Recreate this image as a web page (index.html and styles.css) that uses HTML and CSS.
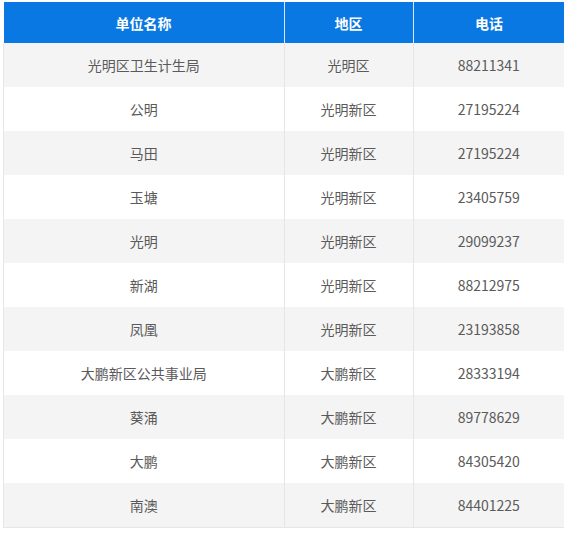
FILE: index.html
```html
<!DOCTYPE html>
<html lang="zh">
<head>
<meta charset="utf-8">
<link rel="stylesheet" href="styles.css">
</head>
<body>
<table class="tbl">
  <thead>
    <tr><th class="c1">单位名称</th><th class="c2">地区</th><th class="c3">电话</th></tr>
  </thead>
  <tbody>
    <tr><td>光明区卫生计生局</td><td>光明区</td><td>88211341</td></tr>
    <tr><td>公明</td><td>光明新区</td><td>27195224</td></tr>
    <tr><td>马田</td><td>光明新区</td><td>27195224</td></tr>
    <tr><td>玉塘</td><td>光明新区</td><td>23405759</td></tr>
    <tr><td>光明</td><td>光明新区</td><td>29099237</td></tr>
    <tr><td>新湖</td><td>光明新区</td><td>88212975</td></tr>
    <tr><td>凤凰</td><td>光明新区</td><td>23193858</td></tr>
    <tr><td>大鹏新区公共事业局</td><td>大鹏新区</td><td>28333194</td></tr>
    <tr><td>葵涌</td><td>大鹏新区</td><td>89778629</td></tr>
    <tr><td>大鹏</td><td>大鹏新区</td><td>84305420</td></tr>
    <tr><td>南澳</td><td>大鹏新区</td><td>84401225</td></tr>
  </tbody>
</table>
</body>
</html>
```
FILE: styles.css
```css
html, body { margin: 0; padding: 0; background: #fff; }
body { padding: 2px 0 0 3px; font-family: "Noto Sans CJK SC", "Noto Sans", sans-serif; }
.tbl {
  border-collapse: collapse;
  width: 559px;
  table-layout: fixed;
  font-size: 14px;
}
.c1 { width: 280px; }
.c2 { width: 128px; }
.c3 { width: 151px; }
.tbl th {
  background: #0a78e2;
  color: #fff;
  font-weight: bold;
  height: 41px;
  padding: 0;
  border-left: 1px solid #d6e8fa;
  text-align: center;
}
.tbl th:first-child { border-left: none; }
.tbl td {
  height: 44px;
  padding: 0;
  text-align: center;
  color: #5a5a5a;
  border: 1px solid #e6e6e6;
  border-top: none;
  border-bottom: none;
}
.tbl tbody tr:nth-child(odd) td { background: #f4f4f4; }
.tbl tbody tr:last-child td { border-bottom: 1px solid #e6e6e6; }
```
